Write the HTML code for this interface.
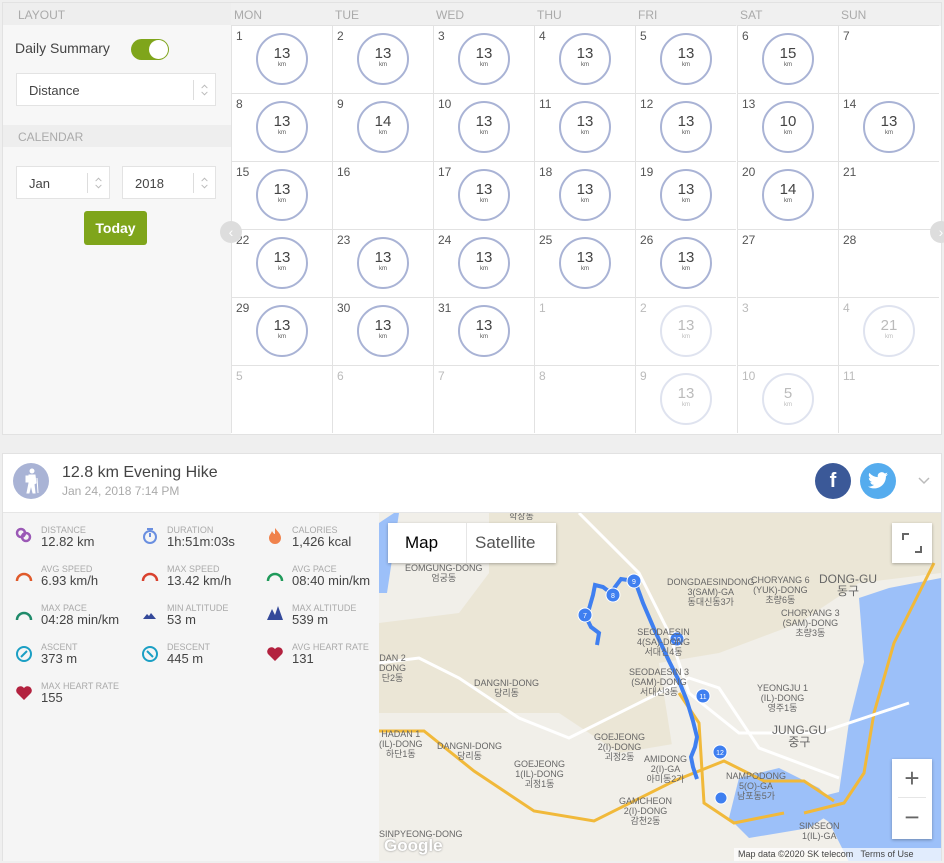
<!DOCTYPE html>
<html><head><meta charset="utf-8"><style>
*{box-sizing:border-box;margin:0;padding:0}
body{width:944px;height:863px;background:#efefef;font-family:"Liberation Sans","Noto Sans CJK KR",sans-serif;position:relative;overflow:hidden;color:#444}
.top{position:absolute;left:2px;top:2px;width:940px;height:433px;background:#f5f5f5;border:1px solid #e2e2e2}
.side{position:absolute;left:0;top:0;width:229px;height:431px;background:#f7f7f7}
.sh{position:absolute;left:0;width:229px;height:22px;background:#eee;color:#aaa;font-size:12px;padding:5px 0 0 15px}
.sel{position:absolute;background:#fff;border:1px solid #e3e3e3;height:33px;font-size:13px;color:#444;padding:9px 0 0 12px}
.sel .ar{position:absolute;right:0;top:6px;width:22px;height:20px;border-left:1px solid #ddd}
.grid{position:absolute;left:228px;top:0;width:710px;height:431px;background:#fff}
.dh{position:absolute;top:0;height:23px;background:#f0f0f0;color:#aaa;font-size:12px;padding:5px 0 0 3px;width:710px}
.dh span{position:absolute;top:5px}
.c{position:absolute;width:101px;height:68px;border-left:1px solid #e2e2e2;border-top:1px solid #e2e2e2}
.c b{position:absolute;left:4px;top:3px;font-weight:normal;font-size:12px;color:#555}
.c.f b{color:#bbb}
.r{position:absolute;left:24px;top:7px;width:52px;height:52px;border:2.5px solid #a9b3d5;border-radius:50%;text-align:center;font-size:15px;color:#444;padding-top:11px;line-height:15px}
.r i{display:block;font-style:normal;font-size:6px;line-height:8px;color:#555}
.c.f .r{border-color:#dfe3ef;color:#bbb}
.c.f .r i{color:#bbb}
.card{position:absolute;left:2px;top:453px;width:940px;height:408px;background:#fff;border:1px solid #e2e2e2}
.stats{position:absolute;left:0;top:58px;width:376px;height:349px;background:#f5f5f5;border-top:1px solid #e6e6e6}
.st{position:absolute;font-size:13px;color:#444;line-height:14px}
.st small{display:block;font-size:9px;color:#aaa;line-height:10px}
.ic{position:absolute;width:18px;height:18px}
.map{position:absolute;left:376px;top:58px;width:562px;height:349px;background:#ebe6d6;overflow:hidden;border-top:1px solid #e6e6e6}
.lbl{position:absolute;font-size:9px;color:#666;text-align:center;line-height:10px}
</style></head><body>
<svg width="0" height="0" style="position:absolute"><defs><symbol id="ud" viewBox="0 0 22 20"><path d="M8 8l3-3 3 3M8 12l3 3 3-3" fill="none" stroke="#bbb" stroke-width="1"/></symbol></defs></svg>
<div class="top">
 <div class="side">
  <div class="sh" style="top:0">LAYOUT</div>
  <div style="position:absolute;left:12px;top:37px;font-size:14px;color:#444">Daily Summary</div>
  <div style="position:absolute;left:128px;top:36px;width:38px;height:21px;border-radius:11px;background:#7fa51b"></div>
  <div style="position:absolute;left:146px;top:37px;width:19px;height:19px;border-radius:50%;background:#fff"></div>
  <div class="sel" style="left:13px;top:70px;width:200px">Distance<svg class="ar"><use href="#ud"/></svg></div>
  <div class="sh" style="top:122px">CALENDAR</div>
  <div class="sel" style="left:13px;top:163px;width:94px">Jan<svg class="ar"><use href="#ud"/></svg></div>
  <div class="sel" style="left:119px;top:163px;width:94px">2018<svg class="ar"><use href="#ud"/></svg></div>
  <div style="position:absolute;left:81px;top:208px;width:63px;height:34px;background:#7fa51b;border-radius:3px;color:#fff;font-size:14px;font-weight:bold;text-align:center;padding-top:9px">Today</div>
 </div>
 <div style="position:absolute;left:217px;top:218px;width:22px;height:22px;border-radius:50%;background:#ddd;color:#fff;font-size:14px;text-align:center;line-height:22px;z-index:3">‹</div>
 <div style="position:absolute;left:927px;top:218px;width:22px;height:22px;border-radius:50%;background:#ddd;color:#fff;font-size:14px;text-align:center;line-height:22px;z-index:3">›</div>
 <div class="grid">
  <div class="dh"><span style="left:3px">MON</span><span style="left:104px">TUE</span><span style="left:205px">WED</span><span style="left:306px">THU</span><span style="left:407px">FRI</span><span style="left:509px">SAT</span><span style="left:610px">SUN</span></div>
  <div class="c" style="left:0;top:22px"><b>1</b><div class="r">13<i>km</i></div></div>
  <div class="c" style="left:101px;top:22px"><b>2</b><div class="r">13<i>km</i></div></div>
  <div class="c" style="left:202px;top:22px"><b>3</b><div class="r">13<i>km</i></div></div>
  <div class="c" style="left:303px;top:22px"><b>4</b><div class="r">13<i>km</i></div></div>
  <div class="c" style="left:404px;top:22px"><b>5</b><div class="r">13<i>km</i></div></div>
  <div class="c" style="left:506px;top:22px"><b>6</b><div class="r">15<i>km</i></div></div>
  <div class="c" style="left:607px;top:22px"><b>7</b></div>
  <div class="c" style="left:0;top:90px"><b>8</b><div class="r">13<i>km</i></div></div>
  <div class="c" style="left:101px;top:90px"><b>9</b><div class="r">14<i>km</i></div></div>
  <div class="c" style="left:202px;top:90px"><b>10</b><div class="r">13<i>km</i></div></div>
  <div class="c" style="left:303px;top:90px"><b>11</b><div class="r">13<i>km</i></div></div>
  <div class="c" style="left:404px;top:90px"><b>12</b><div class="r">13<i>km</i></div></div>
  <div class="c" style="left:506px;top:90px"><b>13</b><div class="r">10<i>km</i></div></div>
  <div class="c" style="left:607px;top:90px"><b>14</b><div class="r">13<i>km</i></div></div>
  <div class="c" style="left:0;top:158px"><b>15</b><div class="r">13<i>km</i></div></div>
  <div class="c" style="left:101px;top:158px"><b>16</b></div>
  <div class="c" style="left:202px;top:158px"><b>17</b><div class="r">13<i>km</i></div></div>
  <div class="c" style="left:303px;top:158px"><b>18</b><div class="r">13<i>km</i></div></div>
  <div class="c" style="left:404px;top:158px"><b>19</b><div class="r">13<i>km</i></div></div>
  <div class="c" style="left:506px;top:158px"><b>20</b><div class="r">14<i>km</i></div></div>
  <div class="c" style="left:607px;top:158px"><b>21</b></div>
  <div class="c" style="left:0;top:226px"><b>22</b><div class="r">13<i>km</i></div></div>
  <div class="c" style="left:101px;top:226px"><b>23</b><div class="r">13<i>km</i></div></div>
  <div class="c" style="left:202px;top:226px"><b>24</b><div class="r">13<i>km</i></div></div>
  <div class="c" style="left:303px;top:226px"><b>25</b><div class="r">13<i>km</i></div></div>
  <div class="c" style="left:404px;top:226px"><b>26</b><div class="r">13<i>km</i></div></div>
  <div class="c" style="left:506px;top:226px"><b>27</b></div>
  <div class="c" style="left:607px;top:226px"><b>28</b></div>
  <div class="c" style="left:0;top:294px"><b>29</b><div class="r">13<i>km</i></div></div>
  <div class="c" style="left:101px;top:294px"><b>30</b><div class="r">13<i>km</i></div></div>
  <div class="c" style="left:202px;top:294px"><b>31</b><div class="r">13<i>km</i></div></div>
  <div class="c f" style="left:303px;top:294px"><b>1</b></div>
  <div class="c f" style="left:404px;top:294px"><b>2</b><div class="r">13<i>km</i></div></div>
  <div class="c f" style="left:506px;top:294px"><b>3</b></div>
  <div class="c f" style="left:607px;top:294px"><b>4</b><div class="r">21<i>km</i></div></div>
  <div class="c f" style="left:0;top:362px"><b>5</b></div>
  <div class="c f" style="left:101px;top:362px"><b>6</b></div>
  <div class="c f" style="left:202px;top:362px"><b>7</b></div>
  <div class="c f" style="left:303px;top:362px"><b>8</b></div>
  <div class="c f" style="left:404px;top:362px"><b>9</b><div class="r">13<i>km</i></div></div>
  <div class="c f" style="left:506px;top:362px"><b>10</b><div class="r">5<i>km</i></div></div>
  <div class="c f" style="left:607px;top:362px"><b>11</b></div>
 </div>
</div>

<div class="card">
 <div style="position:absolute;left:10px;top:9px;width:36px;height:36px;border-radius:50%;background:#a9b3d5"></div>
 <svg style="position:absolute;left:18px;top:14px" width="20" height="26" viewBox="0 0 20 26"><circle cx="11" cy="3" r="2.5" fill="#fff"/><path d="M8 7h6l1 8-2 1 1 9h-2l-2-8-2 8H6l2-10z M5 8h3v6H5z M16 10l1 15" fill="#fff" stroke="#fff" stroke-width="1"/></svg>
 <div style="position:absolute;left:59px;top:10px;font-size:16px;color:#444">12.8 km Evening Hike</div>
 <div style="position:absolute;left:59px;top:30px;font-size:12px;color:#aaa">Jan 24, 2018 7:14 PM</div>
 <div style="position:absolute;left:812px;top:9px;width:36px;height:36px;border-radius:50%;background:#3b5998;color:#fff;font-weight:bold;font-size:20px;text-align:center;line-height:36px">f</div>
 <div style="position:absolute;left:857px;top:9px;width:36px;height:36px;border-radius:50%;background:#55acee"></div>
 <svg style="position:absolute;left:865px;top:18px" width="20" height="17" viewBox="0 0 24 20"><path d="M24 2.4a10 10 0 0 1-2.8.8A5 5 0 0 0 23.3.4a10 10 0 0 1-3.1 1.2A4.9 4.9 0 0 0 11.8 6 14 14 0 0 1 1.7.9a4.9 4.9 0 0 0 1.5 6.6 5 5 0 0 1-2.2-.6 4.9 4.9 0 0 0 3.9 4.9 5 5 0 0 1-2.2.1 4.9 4.9 0 0 0 4.6 3.4A9.9 9.9 0 0 1 0 17.3 14 14 0 0 0 7.5 19.5c9 0 14-7.5 14-14v-.6A10 10 0 0 0 24 2.4z" fill="#fff"/></svg>
 <svg style="position:absolute;left:914px;top:22px" width="14" height="10"><path d="M2 2l5 5 5-5" fill="none" stroke="#bbb" stroke-width="1.5"/></svg>

 <div class="stats">
  <svg class="ic" style="left:12px;top:14px" viewBox="0 0 18 18"><circle cx="6" cy="6" r="4" fill="none" stroke="#9b59b6" stroke-width="2.5"/><circle cx="11" cy="10" r="4" fill="none" stroke="#9b59b6" stroke-width="2.5"/></svg>
  <div class="st" style="left:38px;top:12px"><small>DISTANCE</small>12.82 km</div>
  <svg class="ic" style="left:138px;top:14px" viewBox="0 0 18 18"><circle cx="9" cy="10" r="6" fill="none" stroke="#6a8fe0" stroke-width="2"/><path d="M6 2h6M9 10V6" stroke="#6a8fe0" stroke-width="2"/></svg>
  <div class="st" style="left:164px;top:12px"><small>DURATION</small>1h:51m:03s</div>
  <svg class="ic" style="left:263px;top:14px" viewBox="0 0 18 18"><path d="M9 1c3 4 6 6 6 10a6 6 0 0 1-12 0c0-3 2-4 3-7 1 2 2 3 3 3z" fill="#f0824c"/></svg>
  <div class="st" style="left:289px;top:12px"><small>CALORIES</small>1,426 kcal</div>

  <svg class="ic" style="left:12px;top:54px" viewBox="0 0 18 18"><path d="M2 14a7 7 0 0 1 14 0" fill="none" stroke="#e05a2b" stroke-width="2.5"/></svg>
  <div class="st" style="left:38px;top:51px"><small>AVG SPEED</small>6.93 km/h</div>
  <svg class="ic" style="left:138px;top:54px" viewBox="0 0 18 18"><path d="M2 14a7 7 0 0 1 14 0" fill="none" stroke="#d9412e" stroke-width="2.5"/></svg>
  <div class="st" style="left:164px;top:51px"><small>MAX SPEED</small>13.42 km/h</div>
  <svg class="ic" style="left:263px;top:54px" viewBox="0 0 18 18"><path d="M2 14a7 7 0 0 1 14 0" fill="none" stroke="#1f9a5a" stroke-width="2.5"/></svg>
  <div class="st" style="left:289px;top:51px"><small>AVG PACE</small>08:40 min/km</div>

  <svg class="ic" style="left:12px;top:93px" viewBox="0 0 18 18"><path d="M2 14a7 7 0 0 1 14 0" fill="none" stroke="#1f8a6a" stroke-width="2.5"/></svg>
  <div class="st" style="left:38px;top:90px"><small>MAX PACE</small>04:28 min/km</div>
  <svg class="ic" style="left:138px;top:93px" viewBox="0 0 18 18"><path d="M2 13l4-5 2 2 2-3 5 6z" fill="#34499a"/></svg>
  <div class="st" style="left:164px;top:90px"><small>MIN ALTITUDE</small>53 m</div>
  <svg class="ic" style="left:263px;top:91px" viewBox="0 0 18 18"><path d="M1 16l5-11 3 6 3-9 5 14z" fill="#34499a"/></svg>
  <div class="st" style="left:289px;top:90px"><small>MAX ALTITUDE</small>539 m</div>

  <svg class="ic" style="left:12px;top:132px" viewBox="0 0 18 18"><circle cx="9" cy="9" r="7" fill="none" stroke="#1b9fc4" stroke-width="2"/><path d="M6 12l6-6" stroke="#1b9fc4" stroke-width="2"/></svg>
  <div class="st" style="left:38px;top:129px"><small>ASCENT</small>373 m</div>
  <svg class="ic" style="left:138px;top:132px" viewBox="0 0 18 18"><circle cx="9" cy="9" r="7" fill="none" stroke="#1b9fc4" stroke-width="2"/><path d="M6 6l6 6" stroke="#1b9fc4" stroke-width="2"/></svg>
  <div class="st" style="left:164px;top:129px"><small>DESCENT</small>445 m</div>
  <svg class="ic" style="left:263px;top:132px" viewBox="0 0 18 18"><path d="M9 16L2 9a4 4 0 0 1 7-5 4 4 0 0 1 7 5z" fill="#b3223f"/></svg>
  <div class="st" style="left:289px;top:129px"><small>AVG HEART RATE</small>131</div>

  <svg class="ic" style="left:12px;top:171px" viewBox="0 0 18 18"><path d="M9 16L2 9a4 4 0 0 1 7-5 4 4 0 0 1 7 5z" fill="#b3223f"/></svg>
  <div class="st" style="left:38px;top:168px"><small>MAX HEART RATE</small>155</div>
 </div>

 <div class="map">
  <svg width="562" height="349" viewBox="0 0 562 349" style="position:absolute;left:0;top:0">
   <rect width="562" height="349" fill="#ebe6d6"/>
   <path d="M0 0h110v60l-30 40-80 10z" fill="#f1efe9"/>
   <path d="M0 200h180l60 40 60-10 60 20v100H0z" fill="#f1efe9"/>
   <path d="M280 150l60-10 80-30 60-40 82-10v280H310z" fill="#f1efe9"/>
   <path d="M15 0h5L8 80H0V10z" fill="#9cc0f9"/>
   <path d="M480 85l30-10 52-10v284H470l-20-40-30-20 40-10 10-70 15-60z" fill="#9cc0f9"/>
   <path d="M360 265l40-10 40 20 20 20-30 20-60 10-20-20z" fill="#9cc0f9"/>
   <path d="M0 150l40 -5 40 20 60 40 50 20 80-40 40-20 30 10 40 60 80 30" fill="none" stroke="#fff" stroke-width="3"/>
   <path d="M0 218h45l50 40 60 40 60 10 80-40 50-20 40 20 40 0 30 20" fill="none" stroke="#f1b93a" stroke-width="3"/>
   <path d="M555 50l-40 80-20 70-10 60-20 30-40 10" fill="none" stroke="#f1b93a" stroke-width="3"/>
   <path d="M300 180l20 30 5 80 30 20 50-10" fill="none" stroke="#f1b93a" stroke-width="3"/>
   <path d="M200 0l60 60 30 60 20 60 50 40 80 0 90-30" fill="none" stroke="#fff" stroke-width="3"/>
   <path d="M256 68l8 22 12 28 14 30 10 20 8 20 6 20 4 16-2 10-4 10 2 10 4 12" fill="none" stroke="#3f7ff0" stroke-width="4"/>
   <path d="M256 68l-14-2-6 8-4 6-8-6-8-2-2 10-4 14-2 10 4 8 8 6-2 12" fill="none" stroke="#3f7ff0" stroke-width="4"/>
   <circle cx="255" cy="68" r="7" fill="#3f7ff0" stroke="#fff"/><text x="255" y="71" font-size="7" fill="#fff" text-anchor="middle" font-family="Liberation Sans">9</text>
   <circle cx="234" cy="82" r="7" fill="#3f7ff0" stroke="#fff"/><text x="234" y="85" font-size="7" fill="#fff" text-anchor="middle" font-family="Liberation Sans">8</text>
   <circle cx="206" cy="102" r="7" fill="#3f7ff0" stroke="#fff"/><text x="206" y="105" font-size="7" fill="#fff" text-anchor="middle" font-family="Liberation Sans">7</text>
   <circle cx="298" cy="126" r="7" fill="#3f7ff0" stroke="#fff"/><text x="298" y="129" font-size="7" fill="#fff" text-anchor="middle" font-family="Liberation Sans">10</text>
   <circle cx="324" cy="183" r="7" fill="#3f7ff0" stroke="#fff"/><text x="324" y="186" font-size="7" fill="#fff" text-anchor="middle" font-family="Liberation Sans">11</text>
   <circle cx="341" cy="239" r="7" fill="#3f7ff0" stroke="#fff"/><text x="341" y="242" font-size="7" fill="#fff" text-anchor="middle" font-family="Liberation Sans">12</text>
   <circle cx="342" cy="285" r="6" fill="#3f7ff0" stroke="#fff"/>
  </svg>
  <div class="lbl" style="left:130px;top:-2px">학장동</div>
  <div class="lbl" style="left:26px;top:50px">EOMGUNG-DONG<br>엄궁동</div>
  <div class="lbl" style="left:288px;top:64px">DONGDAESINDONG<br>3(SAM)-GA<br>동대신동3가</div>
  <div class="lbl" style="left:372px;top:62px">CHORYANG 6<br>(YUK)-DONG<br>초량6동</div>
  <div class="lbl" style="left:440px;top:60px;font-size:12px;line-height:12px">DONG-GU<br>동구</div>
  <div class="lbl" style="left:402px;top:95px">CHORYANG 3<br>(SAM)-DONG<br>초량3동</div>
  <div class="lbl" style="left:258px;top:114px">SEODAESIN<br>4(SA)-DONG<br>서대신4동</div>
  <div class="lbl" style="left:250px;top:154px">SEODAESIN 3<br>(SAM)-DONG<br>서대신3동</div>
  <div class="lbl" style="left:95px;top:165px">DANGNI-DONG<br>당리동</div>
  <div class="lbl" style="left:0;top:140px">DAN 2<br>DONG<br>단2동</div>
  <div class="lbl" style="left:378px;top:170px">YEONGJU 1<br>(IL)-DONG<br>영주1동</div>
  <div class="lbl" style="left:393px;top:211px;font-size:12px;line-height:12px">JUNG-GU<br>중구</div>
  <div class="lbl" style="left:0px;top:216px">HADAN 1<br>(IL)-DONG<br>하단1동</div>
  <div class="lbl" style="left:58px;top:228px">DANGNI-DONG<br>당리동</div>
  <div class="lbl" style="left:215px;top:219px">GOEJEONG<br>2(I)-DONG<br>괴정2동</div>
  <div class="lbl" style="left:135px;top:246px">GOEJEONG<br>1(IL)-DONG<br>괴정1동</div>
  <div class="lbl" style="left:265px;top:241px">AMIDONG<br>2(I)-GA<br>아미동2가</div>
  <div class="lbl" style="left:347px;top:258px">NAMPODONG<br>5(O)-GA<br>남포동5가</div>
  <div class="lbl" style="left:240px;top:283px">GAMCHEON<br>2(I)-DONG<br>감천2동</div>
  <div class="lbl" style="left:0;top:316px">SINPYEONG-DONG</div>
  <div class="lbl" style="left:420px;top:308px">SINSEON<br>1(IL)-GA</div>
  <div style="position:absolute;left:5px;top:323px;font-size:17px;color:#fff;font-weight:bold;text-shadow:0 0 2px #888">Google</div>
  <div style="position:absolute;left:355px;top:335px;height:14px;font-size:9px;color:#444;background:rgba(255,255,255,.7);padding:1px 4px;width:207px">Map data ©2020 SK telecom &nbsp; Terms of Use</div>
  <div style="position:absolute;left:9px;top:10px;width:168px;height:40px;background:#fff;box-shadow:0 1px 3px rgba(0,0,0,.3);font-size:17px">
   <span style="position:absolute;left:17px;top:10px;color:#000">Map</span>
   <span style="position:absolute;left:78px;top:0;width:1px;height:40px;background:#e6e6e6"></span>
   <span style="position:absolute;left:87px;top:10px;color:#555">Satellite</span>
  </div>
  <div style="position:absolute;left:513px;top:10px;width:40px;height:40px;background:#fff;box-shadow:0 1px 3px rgba(0,0,0,.3)"></div>
  <svg style="position:absolute;left:523px;top:20px" width="20" height="20"><path d="M1 7V1h6M19 13v6h-6" fill="none" stroke="#666" stroke-width="2"/></svg>
  <div style="position:absolute;left:513px;top:246px;width:40px;height:80px;background:#fff;box-shadow:0 1px 3px rgba(0,0,0,.3);text-align:center;color:#666;font-size:26px;line-height:38px">+<div style="height:1px;background:#e6e6e6;margin:0 6px"></div>−</div>
 </div>
</div>
</body></html>
